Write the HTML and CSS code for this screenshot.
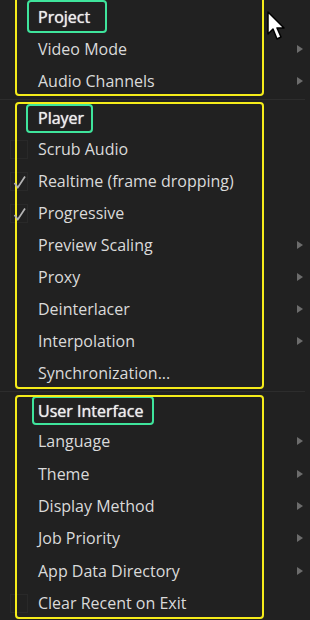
FILE: index.html
```html
<!DOCTYPE html>
<html lang="en">
<head>
    <meta charset="UTF-8">
    <title>Settings menu</title>
    <link rel="stylesheet" href="styles.css">
</head>
<body>
    <div class="menu">

        <div class="section section-project">
            <div class="frame"></div>
            <div class="item">
                <span class="mark"></span>
                <span class="tag tag-project">Project</span>
            </div>
            <div class="item">
                <span class="mark"></span>
                <span class="label">Video Mode</span>
                <span class="arrow"></span>
            </div>
            <div class="item">
                <span class="mark"></span>
                <span class="label">Audio Channels</span>
                <span class="arrow"></span>
            </div>
        </div>

        <div class="separator"></div>

        <div class="section section-player">
            <div class="frame"></div>
            <div class="item">
                <span class="mark"></span>
                <span class="tag tag-player">Player</span>
            </div>
            <div class="item">
                <span class="mark box"></span>
                <span class="label">Scrub Audio</span>
            </div>
            <div class="item">
                <span class="mark box">
                    <svg class="check" width="14" height="13" viewBox="0 0 14 13"><path d="M1.5 7 L4.8 11.5 L12 0.5" fill="none" stroke="#b4b4b4" stroke-width="1.7"/></svg>
                </span>
                <span class="label">Realtime (frame dropping)</span>
            </div>
            <div class="item">
                <span class="mark box">
                    <svg class="check" width="14" height="13" viewBox="0 0 14 13"><path d="M1.5 7 L4.8 11.5 L12 0.5" fill="none" stroke="#b4b4b4" stroke-width="1.7"/></svg>
                </span>
                <span class="label">Progressive</span>
            </div>
            <div class="item">
                <span class="mark"></span>
                <span class="label">Preview Scaling</span>
                <span class="arrow"></span>
            </div>
            <div class="item">
                <span class="mark"></span>
                <span class="label">Proxy</span>
                <span class="arrow"></span>
            </div>
            <div class="item">
                <span class="mark"></span>
                <span class="label">Deinterlacer</span>
                <span class="arrow"></span>
            </div>
            <div class="item">
                <span class="mark"></span>
                <span class="label">Interpolation</span>
                <span class="arrow"></span>
            </div>
            <div class="item">
                <span class="mark"></span>
                <span class="label">Synchronization...</span>
            </div>
        </div>

        <div class="separator"></div>

        <div class="section section-ui">
            <div class="frame"></div>
            <div class="item">
                <span class="mark"></span>
                <span class="tag tag-ui">User Interface</span>
            </div>
            <div class="item">
                <span class="mark"></span>
                <span class="label">Language</span>
                <span class="arrow"></span>
            </div>
            <div class="item">
                <span class="mark"></span>
                <span class="label">Theme</span>
                <span class="arrow"></span>
            </div>
            <div class="item">
                <span class="mark"></span>
                <span class="label">Display Method</span>
                <span class="arrow"></span>
            </div>
            <div class="item">
                <span class="mark"></span>
                <span class="label">Job Priority</span>
                <span class="arrow"></span>
            </div>
            <div class="item">
                <span class="mark"></span>
                <span class="label">App Data Directory</span>
                <span class="arrow"></span>
            </div>
            <div class="item">
                <span class="mark box"></span>
                <span class="label">Clear Recent on Exit</span>
            </div>
        </div>

        <svg class="cursor" width="20" height="32" viewBox="0 0 20 32">
            <path d="M1 1 L1 23 L6 18 L10 28 L14 26 L10 17 L17 17 Z" fill="#fff" stroke="#000" stroke-width="1.5" stroke-linejoin="round"/>
        </svg>
    </div>
</body>
</html>
```

FILE: styles.css
```css
html, body {
    margin: 0;
    background-color: #212121;
}
.menu {
    position: relative;
    width: 310px;
    height: 620px;
    padding-top: 1px;
    box-sizing: border-box;
    overflow: hidden;
    font-family: "Open Sans", "Noto Sans", sans-serif;
    font-size: 16px;
    color: #dadada;
}
.section {
    position: relative;
}
.frame {
    position: absolute;
    left: 15px;
    right: 46px;
    border: 2px solid #f5ec1a;
    border-radius: 4px;
    pointer-events: none;
    z-index: 1;
}
.section-project .frame {
    top: -6px;
    bottom: 1px;
}
.section-player .frame {
    top: 1px;
    bottom: 0;
}
.section-ui .frame {
    top: 2px;
    bottom: 0;
}
.item {
    display: flex;
    align-items: center;
    height: 32px;
}
.section-ui .item {
    height: 32.3px;
}
.mark {
    position: relative;
    width: 38px;
    height: 100%;
    flex-shrink: 0;
}
.mark.box::before {
    content: "";
    position: absolute;
    left: 10px;
    top: 7px;
    width: 18px;
    height: 19px;
    border: 1px solid #292929;
    box-sizing: border-box;
}
.check {
    position: absolute;
    left: 13px;
    top: 11px;
    z-index: 2;
}
.label {
    white-space: nowrap;
}
.arrow {
    margin-left: auto;
    margin-right: 7px;
    width: 0;
    height: 0;
    border-top: 4.5px solid transparent;
    border-bottom: 4.5px solid transparent;
    border-left: 6px solid #6c6c6c;
}
.tag {
    display: flex;
    align-items: center;
    box-sizing: border-box;
    border: 2px solid #3fe49c;
    border-radius: 4px;
    color: #ececec;
    text-shadow: 0 0 1px #ffffff;
    white-space: nowrap;
}
.tag-project {
    height: 33px;
    margin-top: -1px;
    margin-left: -11px;
    padding: 0 15px 0 9px;
}
.tag-player {
    height: 29px;
    margin-top: 2px;
    margin-left: -12px;
    padding: 0 7px 0 10px;
}
.tag-ui {
    height: 29px;
    margin-top: 3px;
    margin-left: -6px;
    padding: 0 9px 0 4px;
}
.separator {
    height: 4px;
    display: flex;
    align-items: center;
}
.separator::before {
    content: "";
    width: 305px;
    height: 1px;
    background-color: #2d2d2d;
}
.cursor {
    position: absolute;
    left: 267px;
    top: 11px;
}
```
